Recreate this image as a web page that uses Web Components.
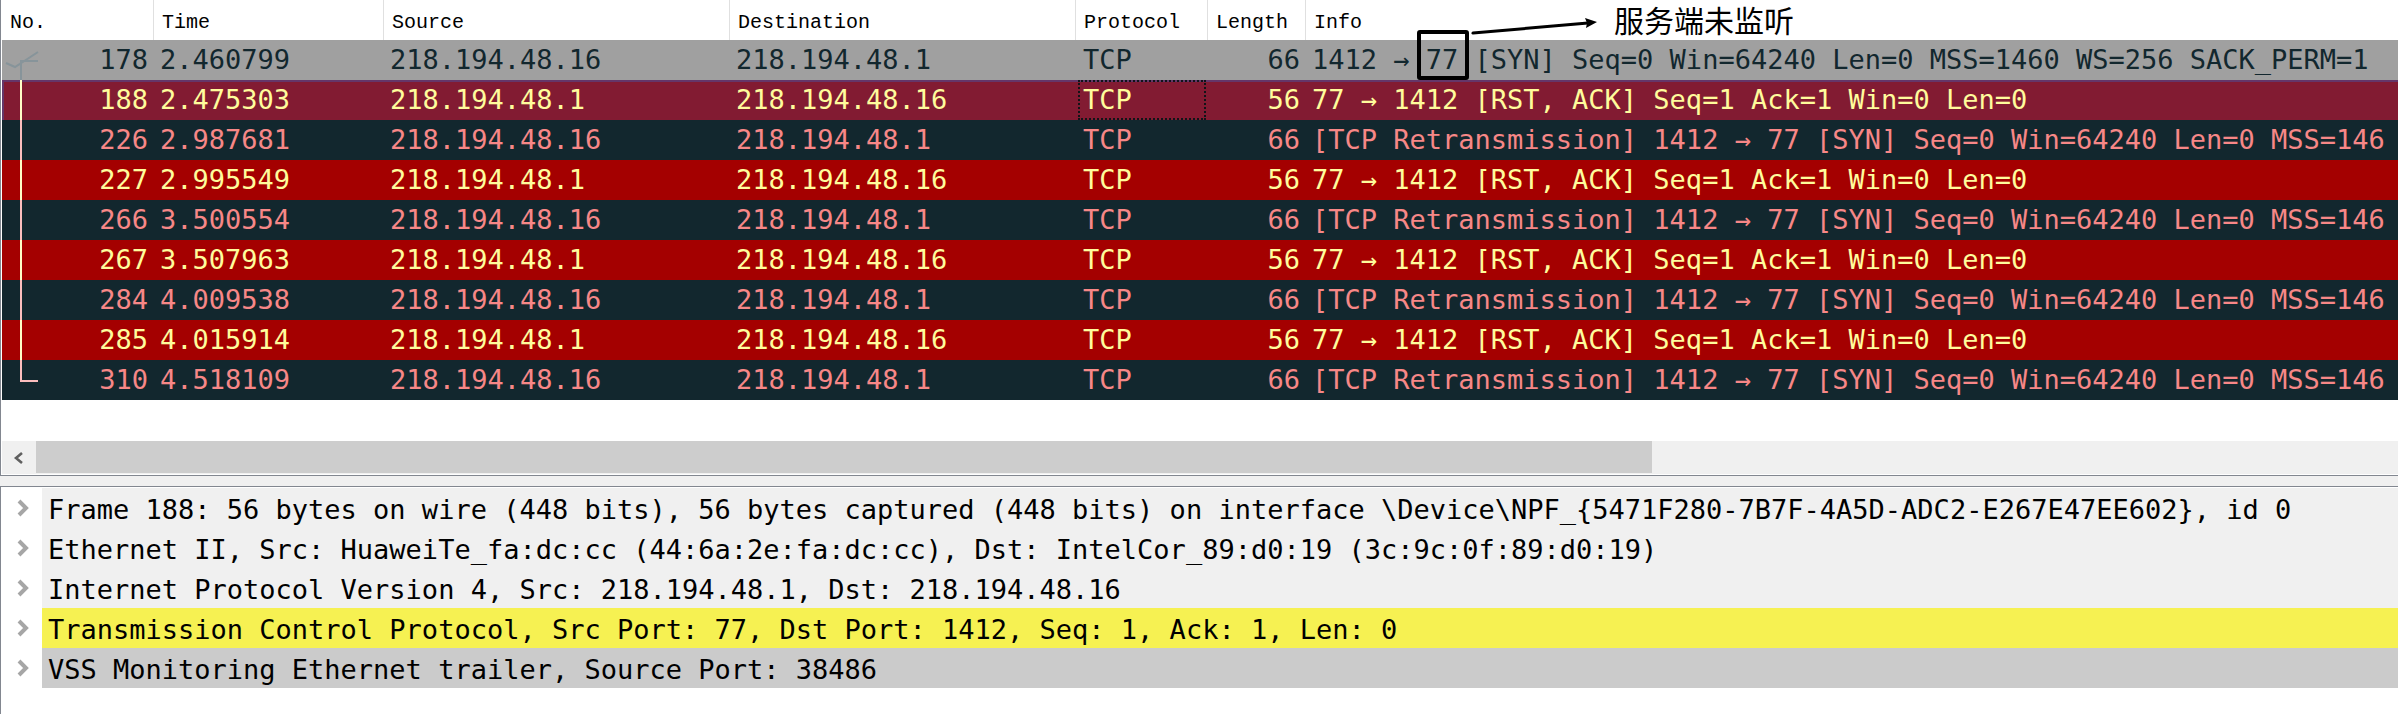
<!DOCTYPE html>
<html lang="en">
<head>
<meta charset="utf-8">
<title>Packet capture</title>
<style>
html,body{margin:0}
body{background:#f0f0f0;color:#000;font:27px/40px "DejaVu Sans Mono",monospace}
</style>
</head>
<body>
<capture-window>
  <packet-list>
    <call-out slot="note">服务端未监听</call-out>
  </packet-list>
  <scroll-strip></scroll-strip>
  <packet-details slot="details">
    <protocol-item>Frame 188: 56 bytes on wire (448 bits), 56 bytes captured (448 bits) on interface \Device\NPF_{5471F280-7B7F-4A5D-ADC2-E267E47EE602}, id 0</protocol-item>
    <protocol-item>Ethernet II, Src: HuaweiTe_fa:dc:cc (44:6a:2e:fa:dc:cc), Dst: IntelCor_89:d0:19 (3c:9c:0f:89:d0:19)</protocol-item>
    <protocol-item>Internet Protocol Version 4, Src: 218.194.48.1, Dst: 218.194.48.16</protocol-item>
    <protocol-item tone="match">Transmission Control Protocol, Src Port: 77, Dst Port: 1412, Seq: 1, Ack: 1, Len: 0</protocol-item>
    <protocol-item tone="current">VSS Monitoring Ethernet trailer, Source Port: 38486</protocol-item>
  </packet-details>
</capture-window>
<script>
const attach = (el, html) => { el.attachShadow({mode: 'open'}).innerHTML = html; };

customElements.define('capture-window', class extends HTMLElement {
  constructor() {
    super();
    attach(this, `<style>
      :host{display:flex;flex-direction:column;gap:10px;min-height:100vh;overflow:hidden}
      section{background:#fff;border:0 solid #828790;border-width:0 0 1px 1px;padding:0 0 1px 1px}
      section.lower{flex:1;border-width:1px 0 0 1px;padding:1px 0 0 0}
    </style>
    <section><slot></slot></section>
    <section class="lower"><slot name="details"></slot></section>`);
  }
});

const PACKETS = [
  ['syn', 178, '2.460799'], ['rst current', 188, '2.475303'],
  ['retry', 226, '2.987681'], ['rst', 227, '2.995549'],
  ['retry', 266, '3.500554'], ['rst', 267, '3.507963'],
  ['retry', 284, '4.009538'], ['rst', 285, '4.015914'],
  ['retry', 310, '4.518109']
];
const A = '218.194.48.16', B = '218.194.48.1';
const INFO = {
  syn: '1412 → 77 [SYN] Seq=0 Win=64240 Len=0 MSS=1460 WS=256 SACK_PERM=1',
  rst: '77 → 1412 [RST, ACK] Seq=1 Ack=1 Win=0 Len=0',
  retry: '[TCP Retransmission] 1412 → 77 [SYN] Seq=0 Win=64240 Len=0 MSS=146'
};

customElements.define('packet-list', class extends HTMLElement {
  constructor() {
    super();
    const rows = PACKETS.map(([kind, no, time], i) => {
      const rst = kind.startsWith('rst');
      const mark = i === 0 ? '<path d="M19 40V21H36M4 23l9 4L36 12"/>'
        : i === PACKETS.length - 1 ? '<path d="M19 0V21H36"/>' : '<path d="M19 0V40"/>';
      return `<tr class="${kind}"><td><div class="no"><svg width="40" height="40" aria-hidden="true">${mark}</svg><span>${no}</span></div></td>
        <td>${time}</td><td>${rst ? B : A}</td><td>${rst ? A : B}</td><td class="proto"><div>TCP</div></td>
        <td class="num">${rst ? 56 : 66}</td><td>${INFO[kind.split(' ')[0]]}</td></tr>`;
    }).join('');
    attach(this, `<style>
      :host{display:block;padding-bottom:41px}
      table{width:100%;table-layout:fixed;border-collapse:separate;border-spacing:0}
      th{height:34px;padding:6px 0 0 8px;font:20px/34px "Liberation Mono",monospace;text-align:left;white-space:nowrap;box-shadow:inset -1px 0 #e0e0e0}
      th:last-child{position:relative;box-shadow:none}
      td{height:40px;padding:0 6px;white-space:nowrap;overflow:hidden}
      td:first-child{padding-left:0}
      td:last-child{padding-right:0}
      .no{display:flex;justify-content:space-between;height:40px}
      .num{text-align:right}
      svg{fill:none;stroke:var(--mark);stroke-width:2}
      .syn{background:#a0a0a0;color:#12272e;--mark:#87949a}
      .rst{background:#a40000;color:#fffc9c;--mark:#fffdc8}
      .retry{background:#12272e;color:#f78787;--mark:#fbbdbd}
      .current{background:#821b32}
      .current td{box-shadow:inset 0 2px #653669}
      .current td:first-child{box-shadow:inset 2px 2px #653669}
      .proto{padding:0 2px}
      .proto div{padding:0 5px}
      .current .proto div{outline:2px dotted #101418;outline-offset:-2px}
    </style>
    <table>
      <colgroup><col style="width:152px"><col style="width:230px"><col style="width:346px"><col style="width:346px"><col style="width:132px"><col style="width:98px"><col></colgroup>
      <thead><tr><th>No.</th><th>Time</th><th>Source</th><th>Destination</th><th>Protocol</th><th>Length</th><th>Info<slot name="note"></slot></th></tr></thead>
      <tbody>${rows}</tbody>
    </table>`);
  }
});

/* Hand-drawn frame around the port number, with an arrow to a remark. */
customElements.define('call-out', class extends HTMLElement {
  constructor() {
    super();
    attach(this, `<style>
      :host{position:absolute;left:111px;top:0;display:flex;font:30px/38px "Noto Sans CJK SC",sans-serif;z-index:1}
      svg{width:197px;height:80px;flex:none}
    </style>
    <svg viewBox="0 0 197 80" aria-hidden="true">
      <rect x="2" y="32" width="48" height="46" rx="1" fill="none" stroke="#000" stroke-width="4"/>
      <path d="M56 33L171 23" stroke="#000" stroke-width="3" stroke-linecap="round"/>
      <path d="M180 22l-12-4 2 5-1 5z"/>
    </svg><span><slot></slot></span>`);
  }
});

customElements.define('scroll-strip', class extends HTMLElement {
  constructor() {
    super();
    attach(this, `<style>
      :host{display:flex;height:33px;background:#f0f0f0}
      button{width:34px;flex:none;border:0;padding:0 2px 0 0;background:none;display:grid;place-items:center}
      .track{flex:1;padding-bottom:1px;display:flex}
      .thumb{width:68.4%;background:#cdcdcd}
    </style>
    <button aria-label="Scroll left"><svg width="10" height="12" viewBox="0 0 10 12"><path d="M9 1L3 6l6 5" fill="none" stroke="#606060" stroke-width="2.6"/></svg></button>
    <div class="track"><div class="thumb"></div></div>`);
  }
});

customElements.define('packet-details', class extends HTMLElement {
  constructor() {
    super();
    attach(this, `<style>:host{display:flex;flex-direction:column}</style><slot></slot>`);
  }
});

customElements.define('protocol-item', class extends HTMLElement {
  constructor() {
    super();
    attach(this, `<style>
      :host{display:flex;white-space:nowrap}
      button{width:41px;flex:none;border:0;padding:0 0 0 3px;background:#fff;display:grid;place-items:center}
      span{flex:1;min-width:0;height:38px;padding:2px 0 0 6px;overflow:hidden;background:#f0f0f0}
      :host([tone=match]) span{background:#f6f152}
      :host([tone=current]) span{background:#cbcbcb}
    </style>
    <button aria-label="Expand"><svg width="12" height="18" viewBox="0 0 12 18"><path d="M2 2l7 7-7 7" fill="none" stroke="#a6a6a6" stroke-width="4"/></svg></button>
    <span><slot></slot></span>`);
  }
});
</script>
</body>
</html>
